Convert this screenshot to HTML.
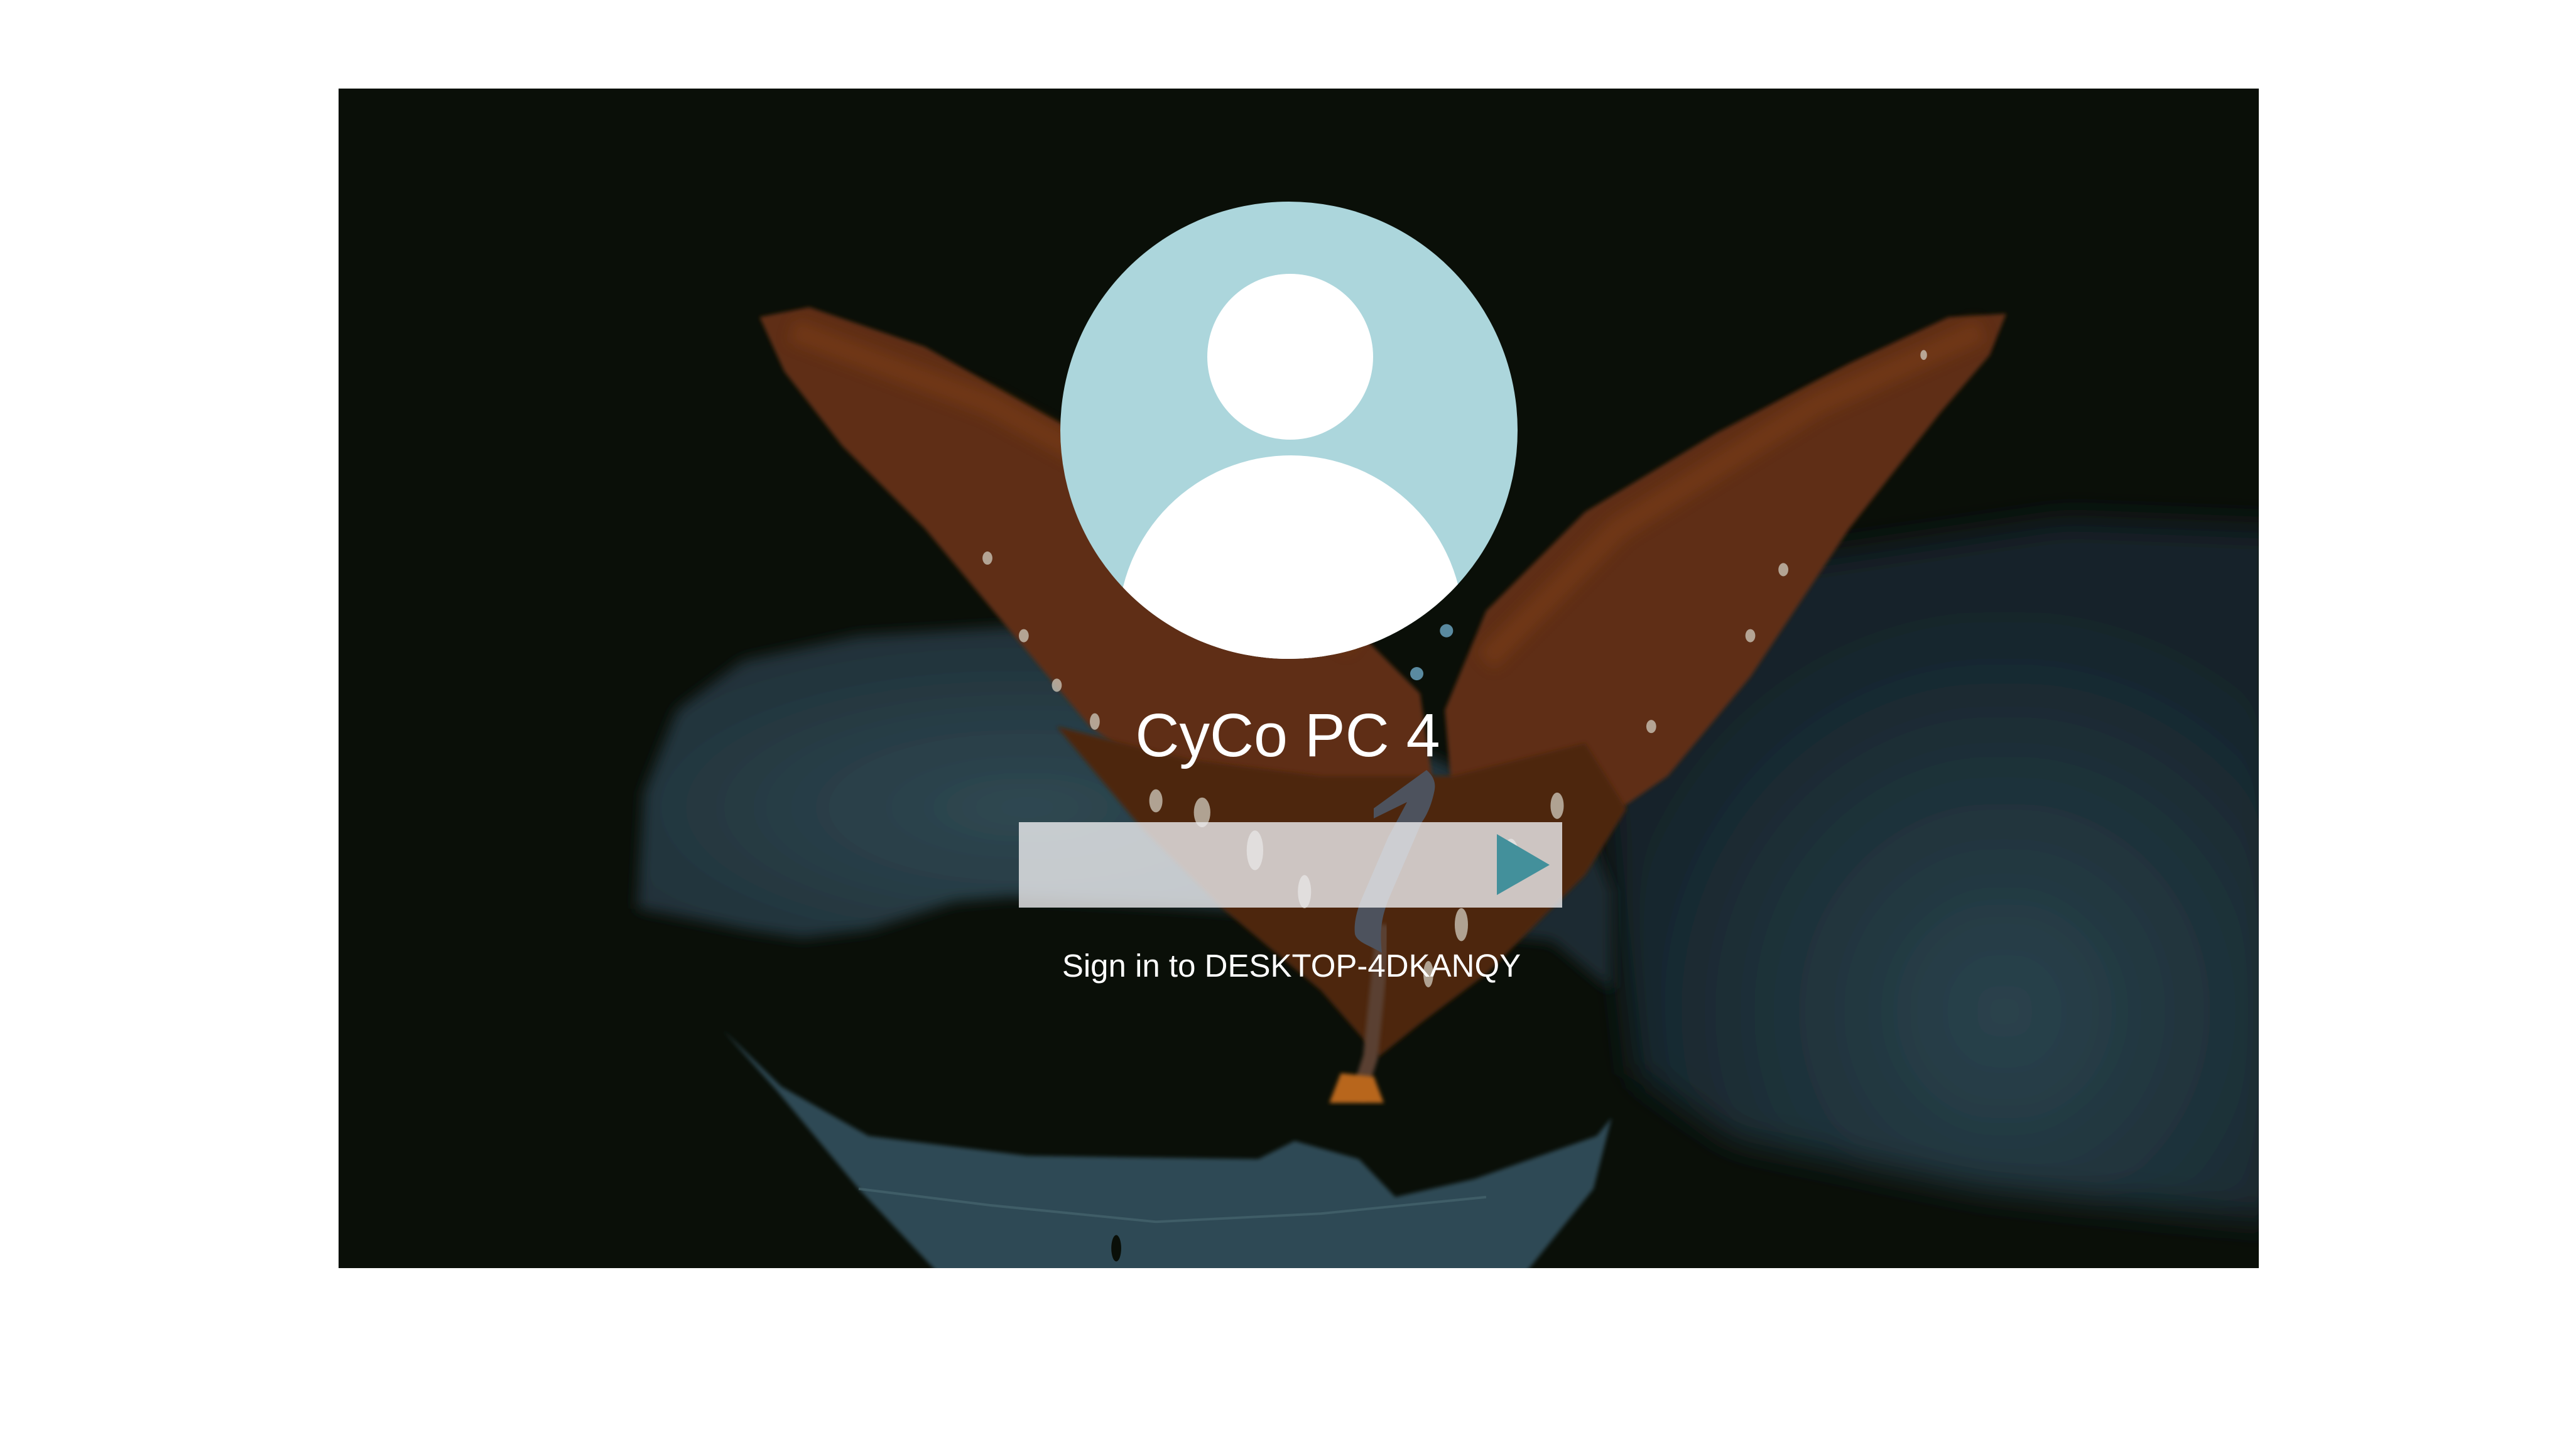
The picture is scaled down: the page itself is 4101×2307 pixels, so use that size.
<!DOCTYPE html>
<html><head><meta charset="utf-8"><style>
html,body{margin:0;padding:0;background:#fff;width:4101px;height:2307px;overflow:hidden}
svg{display:block}
</style></head><body>
<svg width="4101" height="2307" viewBox="0 0 4101 2307" xmlns="http://www.w3.org/2000/svg">
<defs>
<clipPath id="pc"><rect x="539" y="141" width="3057" height="1878"/></clipPath>
<filter id="b8" x="-20%" y="-20%" width="140%" height="140%"><feGaussianBlur stdDeviation="10"/></filter>
<filter id="b4" x="-20%" y="-20%" width="140%" height="140%"><feGaussianBlur stdDeviation="4"/></filter>
<filter id="b2"><feGaussianBlur stdDeviation="1.2"/></filter>
<clipPath id="av"><circle cx="2052" cy="685" r="364"/></clipPath>
<radialGradient id="lg" cx="0.4" cy="0.5" r="0.6"><stop offset="0" stop-color="#2f4852"/><stop offset="1" stop-color="#1d2c33"/></radialGradient>
<radialGradient id="rg" cx="0.6" cy="0.7" r="0.6"><stop offset="0" stop-color="#2a434d"/><stop offset="1" stop-color="#15232a"/></radialGradient>
</defs>
<rect x="539" y="141" width="3057" height="1878" fill="#0a0f08"/>
<g clip-path="url(#pc)">
<g transform="scale(2.6288)">
<!-- right blurry leaf -->
<path d="M965,400 L1080,340 L1250,315 L1380,320 L1380,740 L1200,720 L1050,690 L990,650 L980,560 Z" fill="url(#rg)" filter="url(#b8)"/>
<!-- upper left leaf (blurred) -->
<path d="M386,550 L390,480 L410,430 L450,400 L520,385 L640,378 L760,410 L870,460 L960,500 L976,540 L976,600 L940,570 L800,555 L700,548 L613,543 L578,546 L526,563 L486,568 L452,563 Z" fill="url(#lg)" filter="url(#b4)"/>
<!-- lower lit leaf -->
<path d="M438,624 L473,658 L526,688 L622,700 L762,702 L784,691 L823,702 L845,725 L893,714 L967,688 L976,677 L965,720 L923,772 L569,772 L520,720 L470,660 Z" fill="#2f4a55" filter="url(#b2)"/>
<path d="M520,720 L600,730 L700,740 L800,735 L900,725" stroke="#4b6a73" stroke-width="1.5" fill="none" opacity="0.6"/>
<ellipse cx="676" cy="756" rx="3" ry="8" fill="#0a0f08"/>
<!-- upper wings -->
<path d="M460,192 L490,186 L560,210 L640,255 L720,300 L800,360 L860,420 L870,490 L820,520 L730,490 L660,440 L610,380 L560,320 L510,270 L475,225 Z" fill="#5e2e12" filter="url(#b2)"/>
<path d="M1215,190 L1180,192 L1120,220 L1040,262 L960,310 L900,370 L875,430 L880,490 L945,515 L1010,470 L1060,410 L1120,320 L1175,250 L1205,215 Z" fill="#5e2e12" filter="url(#b2)"/>
<path d="M480,200 L600,245 L720,310 L820,390" stroke="#7a3d18" stroke-width="14" fill="none" opacity="0.6" filter="url(#b4)"/>
<path d="M1200,200 L1100,245 L980,320 L900,400" stroke="#7a3d18" stroke-width="14" fill="none" opacity="0.6" filter="url(#b4)"/>
<!-- lower wings -->
<path d="M640,440 L720,460 L800,470 L880,470 L960,450 L985,490 L960,530 L900,590 L860,620 L835,640 L800,600 L740,550 L690,500 Z" fill="#4e250f" filter="url(#b2)"/>
<g fill="#c9c2b4" opacity="0.8">
<ellipse cx="598" cy="338" rx="3" ry="4"/><ellipse cx="620" cy="385" rx="3" ry="4"/><ellipse cx="640" cy="415" rx="3" ry="4"/><ellipse cx="663" cy="437" rx="3" ry="5"/>
<ellipse cx="700" cy="485" rx="4" ry="7"/><ellipse cx="728" cy="492" rx="5" ry="9"/><ellipse cx="760" cy="515" rx="5" ry="12"/><ellipse cx="790" cy="540" rx="4" ry="10"/>
<ellipse cx="943" cy="488" rx="4" ry="8"/><ellipse cx="915" cy="520" rx="5" ry="12"/><ellipse cx="885" cy="560" rx="4" ry="10"/><ellipse cx="865" cy="590" rx="3" ry="8"/>
<ellipse cx="1080" cy="345" rx="3" ry="4"/><ellipse cx="1060" cy="385" rx="3" ry="4"/><ellipse cx="1000" cy="440" rx="3" ry="4"/><ellipse cx="1165" cy="215" rx="2" ry="3"/>
</g>
<!-- body -->
<path d="M838,560 L830,640 L822,665" stroke="#5a4030" stroke-width="9" fill="none" filter="url(#b2)"/>
<path d="M812,650 L832,652 L838,668 L805,668 Z" fill="#b8661a" filter="url(#b2)"/>
<circle cx="876" cy="382" r="4" fill="#5a8aa0"/><circle cx="858" cy="408" r="4" fill="#5a8aa0"/>
</g>
</g>
<!-- avatar -->
<circle cx="2052" cy="685" r="364" fill="#acd6dc"/>
<ellipse cx="2054" cy="568" rx="132" ry="132" fill="#fff"/>
<g clip-path="url(#av)"><circle cx="2055" cy="1000" r="275" fill="#fff"/><rect x="1700" y="1000" width="700" height="100" fill="#fff"/></g>
<text x="2050" y="1204" font-family="Liberation Sans, sans-serif" font-size="97" fill="#fff" text-anchor="middle">CyCo PC 4</text>
<!-- swoosh -->
<path d="M2271,1226 C2285,1238 2286,1250 2283,1262 C2278,1285 2270,1300 2263,1310 L2210,1433 C2200,1460 2196,1480 2200,1517 C2180,1505 2160,1500 2157,1487 C2155,1470 2160,1450 2167,1433 L2210,1333 L2240,1277 L2187,1303 L2187,1287 Z" fill="#4d525d"/>
<rect x="1622" y="1309" width="865" height="136" fill="rgba(238,238,240,0.8)"/>
<path d="M2383,1328 L2467,1377 L2383,1425 Z" fill="#43909b"/>
<text x="2056" y="1555" font-family="Liberation Sans, sans-serif" font-size="51" fill="#fff" text-anchor="middle">Sign in to DESKTOP-4DKANQY</text>
</svg>
</body></html>
